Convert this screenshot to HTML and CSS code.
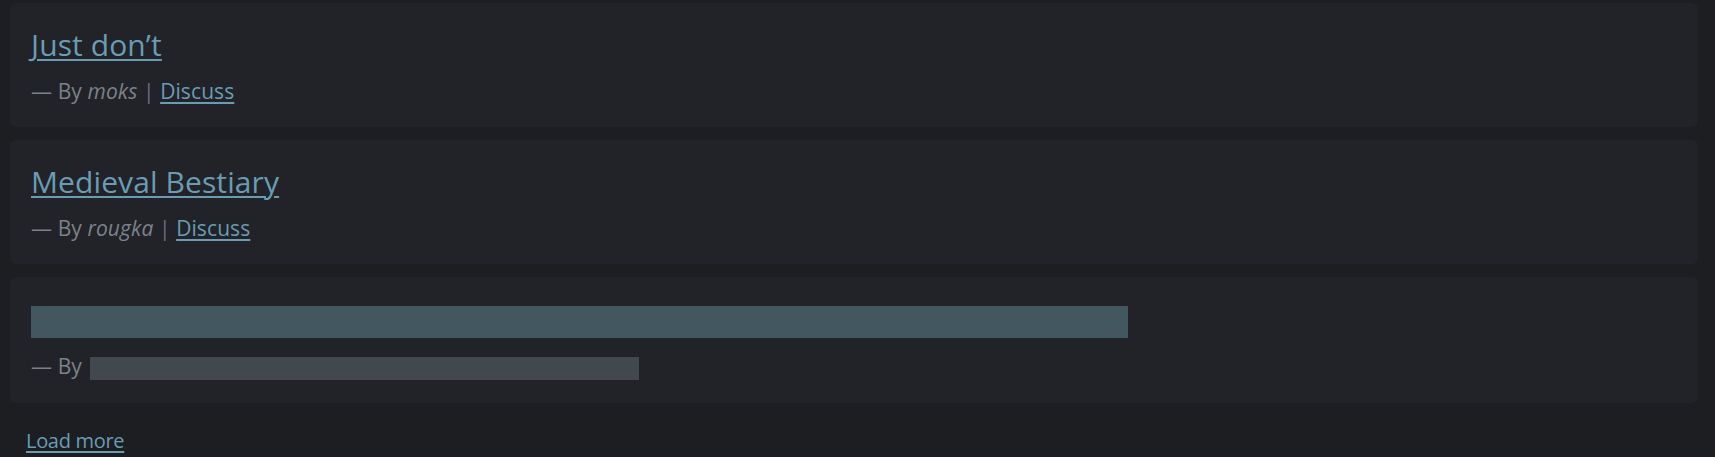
FILE: index.html
```html
<!DOCTYPE html>
<html lang="en">
<head>
<meta charset="utf-8">
<title>Stories</title>
<link rel="stylesheet" href="styles.css">
</head>
<body>
<main class="page">
  <section class="list">
    <article class="card">
      <h2 class="title"><a href="#">Just don’t</a></h2>
      <p class="meta">— By <em class="author">moks</em> <span class="sep">|</span> <a href="#">Discuss</a></p>
    </article>
    <article class="card">
      <h2 class="title"><a href="#">Medieval Bestiary</a></h2>
      <p class="meta">— By <em class="author">rougka</em> <span class="sep">|</span> <a href="#">Discuss</a></p>
    </article>
    <article class="card card-skeleton">
      <div class="skel-title"></div>
      <p class="meta">— By <span class="skel-author"></span></p>
    </article>
  </section>
  <a class="load-more" href="#">Load more</a>
</main>
</body>
</html>
```

FILE: styles.css
```css
html, body {
  margin: 0;
  padding: 0;
  background: #1c1e22;
}
body {
  font-family: "Open Sans", "Noto Sans", sans-serif;
  color: #7c8289;
}
.page {
  padding: 3px 17px 0 10px;
}
.list {
  display: flex;
  flex-direction: column;
  gap: 13px;
}
.card {
  background: #212328;
  border-radius: 6px;
  padding: 22px 21px 22px;
}
.title {
  margin: 0;
  font-size: 30px;
  font-weight: 400;
  line-height: 40px;
  letter-spacing: 0.1px;
}
a {
  color: #6a9cb3;
  text-decoration: underline;
  text-underline-offset: 3px;
}
.title a {
  text-decoration-thickness: 2px;
}
.meta {
  margin: 12px 0 0;
  font-size: 21px;
  line-height: 28px;
  letter-spacing: 0.1px;
}
.author {
  font-style: italic;
}
.sep {
  color: #6b7077;
}
.card-skeleton {
  padding-top: 20px;
  padding-bottom: 23px;
}
.skel-title {
  height: 32px;
  width: 1097px;
  margin-top: 9px;
  background: #425760;
}
.card-skeleton .meta {
  margin-top: 14px;
}
.skel-author {
  display: inline-block;
  width: 549px;
  height: 23px;
  margin-left: 2px;
  vertical-align: -6px;
  background: #43474e;
}
.load-more {
  display: inline-block;
  margin: 24px 0 0 16px;
  font-size: 20px;
  line-height: 28px;
  letter-spacing: -0.3px;
}
```
